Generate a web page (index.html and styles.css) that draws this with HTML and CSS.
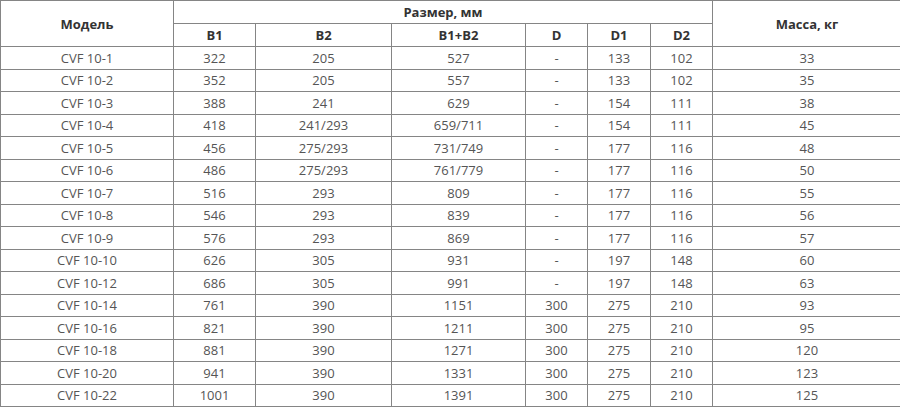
FILE: index.html
```html
<!DOCTYPE html>
<html lang="ru">
<head>
<meta charset="utf-8">
<link rel="stylesheet" href="styles.css">
</head>
<body>
<div class="wrap">
<table class="spec">
<colgroup>
<col class="c-model"><col class="c-b1"><col class="c-b2"><col class="c-b12"><col class="c-d"><col class="c-d1"><col class="c-d2"><col class="c-mass">
</colgroup>
<thead>
<tr><th rowspan="2">Модель</th><th colspan="6">Размер, мм</th><th rowspan="2">Масса, кг</th></tr>
<tr><th>B1</th><th>B2</th><th>B1+B2</th><th>D</th><th>D1</th><th>D2</th></tr>
</thead>
<tbody>
<tr><td>CVF 10-1</td><td>322</td><td>205</td><td>527</td><td>-</td><td>133</td><td>102</td><td>33</td></tr>
<tr><td>CVF 10-2</td><td>352</td><td>205</td><td>557</td><td>-</td><td>133</td><td>102</td><td>35</td></tr>
<tr><td>CVF 10-3</td><td>388</td><td>241</td><td>629</td><td>-</td><td>154</td><td>111</td><td>38</td></tr>
<tr><td>CVF 10-4</td><td>418</td><td>241/293</td><td>659/711</td><td>-</td><td>154</td><td>111</td><td>45</td></tr>
<tr><td>CVF 10-5</td><td>456</td><td>275/293</td><td>731/749</td><td>-</td><td>177</td><td>116</td><td>48</td></tr>
<tr><td>CVF 10-6</td><td>486</td><td>275/293</td><td>761/779</td><td>-</td><td>177</td><td>116</td><td>50</td></tr>
<tr><td>CVF 10-7</td><td>516</td><td>293</td><td>809</td><td>-</td><td>177</td><td>116</td><td>55</td></tr>
<tr><td>CVF 10-8</td><td>546</td><td>293</td><td>839</td><td>-</td><td>177</td><td>116</td><td>56</td></tr>
<tr><td>CVF 10-9</td><td>576</td><td>293</td><td>869</td><td>-</td><td>177</td><td>116</td><td>57</td></tr>
<tr><td>CVF 10-10</td><td>626</td><td>305</td><td>931</td><td>-</td><td>197</td><td>148</td><td>60</td></tr>
<tr><td>CVF 10-12</td><td>686</td><td>305</td><td>991</td><td>-</td><td>197</td><td>148</td><td>63</td></tr>
<tr><td>CVF 10-14</td><td>761</td><td>390</td><td>1151</td><td>300</td><td>275</td><td>210</td><td>93</td></tr>
<tr><td>CVF 10-16</td><td>821</td><td>390</td><td>1211</td><td>300</td><td>275</td><td>210</td><td>95</td></tr>
<tr><td>CVF 10-18</td><td>881</td><td>390</td><td>1271</td><td>300</td><td>275</td><td>210</td><td>120</td></tr>
<tr><td>CVF 10-20</td><td>941</td><td>390</td><td>1331</td><td>300</td><td>275</td><td>210</td><td>123</td></tr>
<tr><td>CVF 10-22</td><td>1001</td><td>390</td><td>1391</td><td>300</td><td>275</td><td>210</td><td>125</td></tr>
</tbody>
</table>
</div>
</body>
</html>
```
FILE: styles.css
```css
html, body {
  margin: 0;
  padding: 0;
  background: #fff;
  overflow: hidden;
}
.wrap {
  width: 901px;
}
.spec {
  width: 901px;
  border-collapse: collapse;
  table-layout: fixed;
  font-family: "Open Sans", sans-serif;
  font-size: 13px;
  color: #555;
}
.c-model { width: 173px; }
.c-b1 { width: 82px; }
.c-b2 { width: 136px; }
.c-b12 { width: 134px; }
.c-d { width: 62px; }
.c-d1 { width: 63px; }
.c-d2 { width: 62px; }
.c-mass { width: 189px; }
.spec th, .spec td {
  border: 1px solid #858585;
  padding: 0;
  text-align: center;
  vertical-align: middle;
  line-height: 18px;
}
.spec th {
  font-weight: 700;
  color: #333;
  height: 22px;
}
.spec td {
  height: 21.52px;
}
```
